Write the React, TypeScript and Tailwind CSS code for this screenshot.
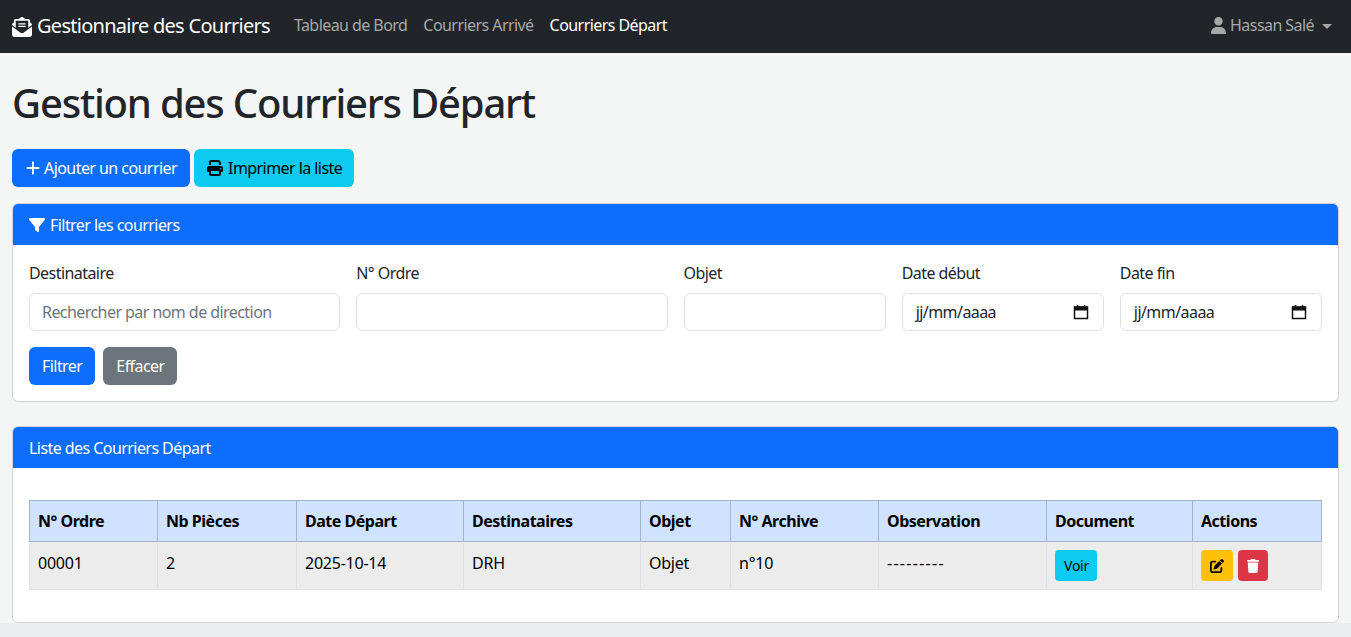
import { FaEnvelopeOpenText, FaPlus, FaPrint, FaFilter, FaUser, FaPenToSquare, FaTrash } from 'react-icons/fa6';

const headers = [
  { label: 'N° Ordre', width: 'w-[128px]' },
  { label: 'Nb Pièces', width: 'w-[139px]' },
  { label: 'Date Départ', width: 'w-[167px]' },
  { label: 'Destinataires', width: 'w-[177px]' },
  { label: 'Objet', width: 'w-[90px]' },
  { label: 'N° Archive', width: 'w-[148px]' },
  { label: 'Observation', width: 'w-[168px]' },
  { label: 'Document', width: 'w-[146px]' },
  { label: 'Actions', width: 'w-[129px]' },
];

const cells = ['00001', '2', '2025-10-14', 'DRH', 'Objet', 'n°10'];

function DateField({ label }: { label: string }) {
  return (
    <div className="col-span-2">
      <label className="block mb-2">{label}</label>
      <div className="h-[38px] flex items-center justify-between pl-[13px] pr-[14px] bg-white border border-[#dee2e6] rounded-md">
        <span>jj/mm/aaaa</span>
        <svg width="16" height="16" viewBox="0 0 16 16" fill="none">
          <path d="M1.5 3h13v11.5h-13z" stroke="#111" strokeWidth="1.5" />
          <path d="M1.5 3h13v3h-13z" fill="#111" stroke="#111" />
          <path d="M4.5 1v2M11.5 1v2" stroke="#111" strokeWidth="1.5" />
        </svg>
      </div>
    </div>
  );
}

export default function App() {
  return (
    <div className="min-h-screen bg-[#ecedef] text-[#212529] text-base tracking-[-0.035em] font-['Noto_Sans','Open_Sans',sans-serif]">
      <nav className="h-[53px] bg-[#212529] flex items-center pl-3 pr-[19px]">
        <a className="flex items-center gap-[5px] text-white text-xl tracking-[-0.036em] mr-6">
          <FaEnvelopeOpenText className="w-5 h-5" />
          <span className="pb-[2px]">Gestionnaire des Courriers</span>
        </a>
        <div className="flex gap-4 pb-[3px] tracking-[-0.035em]">
          <a className="text-[#a6a8aa]">Tableau de Bord</a>
          <a className="text-[#a6a8aa]">Courriers Arrivé</a>
          <a className="text-white">Courriers Départ</a>
        </div>
        <div className="ml-auto flex items-center text-[#a6a8aa]">
          <FaUser className="w-[17px] h-[17px] mr-[3px] mb-[2px]" />
          <span className="pb-[3px]">Hassan Salé</span>
          <span className="ml-2 border-x-[5px] border-t-[5px] border-x-transparent border-t-[#a6a8aa]" />
        </div>
      </nav>

      <main className="bg-[#f4f6f6] h-[570px] px-3 pt-[26px]">
        <h1 className="text-[40px] leading-[48px] font-medium tracking-[-0.03em] mb-[22px]">Gestion des Courriers Départ</h1>

        <div className="flex gap-1 mb-4">
          <button className="h-[38px] px-[13px] flex items-center gap-[3px] bg-[#0d6efd] text-white rounded-md">
            <FaPlus className="w-4 h-4" />
            Ajouter un courrier
          </button>
          <button className="h-[38px] pl-[13px] pr-3 flex items-center gap-[5px] bg-[#0dcaf0] text-black rounded-md">
            <FaPrint className="w-4 h-4" />
            Imprimer la liste
          </button>
        </div>

        <section className="bg-white border border-[#d1d3d4] rounded-md overflow-hidden mb-6">
          <div className="h-[41px] bg-[#0d6efd] text-white px-4 flex items-center gap-[5px]">
            <FaFilter className="w-4 h-4" />
            Filtrer les courriers
          </div>
          <div className="p-4">
            <div className="grid grid-cols-12 gap-x-4 mb-4">
              <div className="col-span-3">
                <label className="block mb-2">Destinataire</label>
                <input
                  placeholder="Rechercher par nom de direction"
                  className="w-full h-[38px] px-[12px] bg-white border border-[#dee2e6] rounded-md placeholder:text-[#6c757d]"
                />
              </div>
              <div className="col-span-3">
                <label className="block mb-2">N° Ordre</label>
                <input className="w-full h-[38px] px-[12px] bg-white border border-[#dee2e6] rounded-md" />
              </div>
              <div className="col-span-2">
                <label className="block mb-2">Objet</label>
                <input className="w-full h-[38px] px-[12px] bg-white border border-[#dee2e6] rounded-md" />
              </div>
              <DateField label="Date début" />
              <DateField label="Date fin" />
            </div>
            <div className="flex gap-2">
              <button className="h-[38px] px-[13px] bg-[#0d6efd] text-white rounded-md">Filtrer</button>
              <button className="h-[38px] pl-[13px] pr-3 bg-[#6c757d] text-white rounded-md">Effacer</button>
            </div>
          </div>
        </section>

        <section className="bg-white border border-[#d1d3d4] rounded-md overflow-hidden">
          <div className="h-[41px] bg-[#0d6efd] text-white px-4 flex items-center">Liste des Courriers Départ</div>
          <div className="px-4 pt-8 pb-8">
            <table className="w-full table-fixed border-collapse">
              <thead>
                <tr className="h-[41px] bg-[#cfe2ff] text-black tracking-[-0.03em]">
                  {headers.map((h) => (
                    <th key={h.label} className={`${h.width} px-2 text-left font-bold border border-[#a6b5cc]`}>
                      {h.label}
                    </th>
                  ))}
                </tr>
              </thead>
              <tbody>
                <tr className="h-[48px] bg-[#ececec] text-black tracking-[-0.015em]">
                  {cells.map((c, i) => (
                    <td key={i} className="px-2 pb-[5px] border border-[#dee2e6]">{c}</td>
                  ))}
                  <td className="px-2 pb-[5px] border border-[#dee2e6] tracking-[0.08em]">---------</td>
                  <td className="px-2 border border-[#dee2e6]">
                    <button className="h-[31px] pl-[9px] pr-2 bg-[#0dcaf0] text-black text-sm rounded">Voir</button>
                  </td>
                  <td className="px-2 border border-[#dee2e6]">
                    <div className="flex gap-[5px]">
                      <button className="w-8 h-[31px] flex items-center justify-center bg-[#ffc107] text-black rounded">
                        <FaPenToSquare className="w-[14px] h-[14px]" />
                      </button>
                      <button className="w-[30px] h-[31px] flex items-center justify-center bg-[#dc3545] text-white rounded">
                        <FaTrash className="w-[14px] h-[14px]" />
                      </button>
                    </div>
                  </td>
                </tr>
              </tbody>
            </table>
          </div>
        </section>
      </main>
    </div>
  );
}
